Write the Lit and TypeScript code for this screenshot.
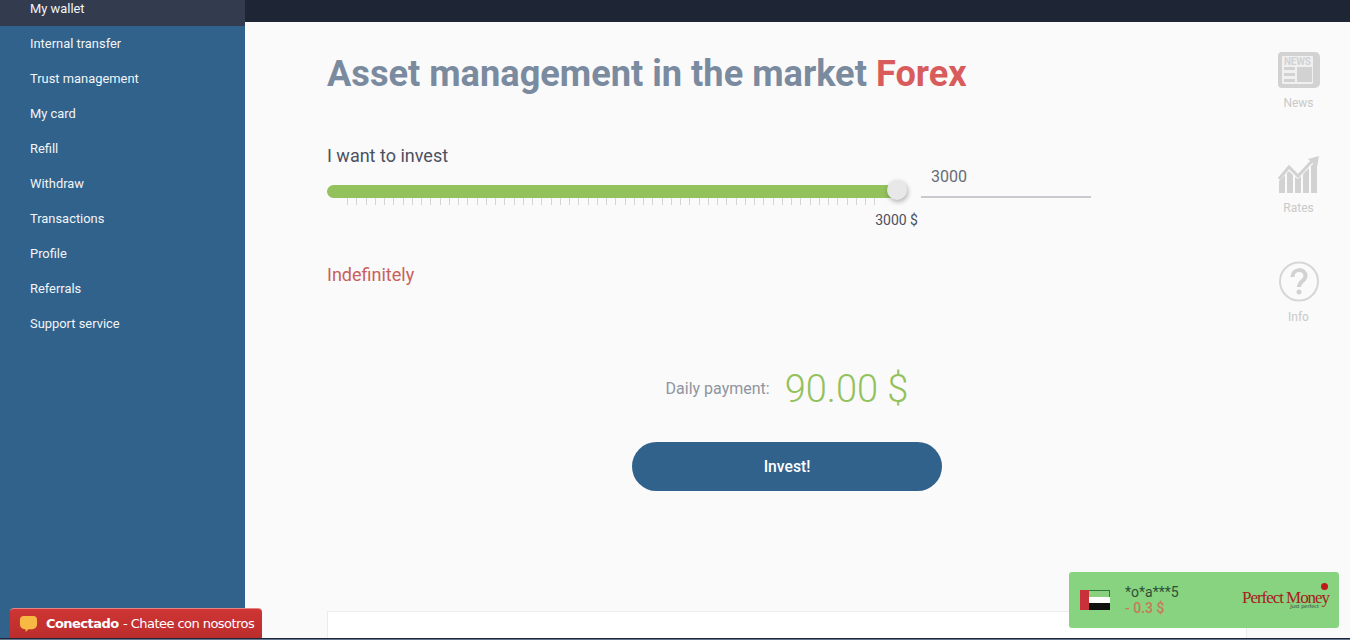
import { LitElement, css, html } from 'lit';
import { customElement } from 'lit/decorators.js';

const MENU = ['Internal transfer', 'Trust management', 'My card', 'Refill', 'Withdraw', 'Transactions', 'Profile', 'Referrals', 'Support service'];

@customElement('app-root')
export class AppRoot extends LitElement {
  static styles = css`
    :host {
      display: block;
      width: 1350px;
      height: 640px;
      overflow: hidden;
      position: relative;
      font-family: Roboto, "Liberation Sans", sans-serif;
      background: #fafafa;
    }

    .page {
      display: grid;
      grid-template-columns: 245px 1fr;
      height: 638px;
    }

    .side {
      background: #30628c;
      color: #f2f5f8;
      font-size: 12.9px;
    }

    .side a {
      display: flex;
      align-items: center;
      height: 35px;
      padding-left: 30px;
    }

    .side a.active {
      height: 26px;
      padding-bottom: 9px;
      box-sizing: border-box;
      background: #333b4f;
    }

    .topbar {
      height: 22px;
      background: #1e2534;
    }

    .main {
      display: grid;
      grid-template-columns: 1fr 105px;
      height: 616px;
      overflow: hidden;
    }

    .content {
      padding: 30px 0 0 82px;
    }

    h1 {
      margin: 0;
      font-size: 36.2px;
      line-height: 44px;
      font-weight: 700;
      color: #7a8a9f;
      white-space: nowrap;
    }

    h1 span {
      color: #d95c5c;
    }

    .want {
      margin-top: 49px;
      font-size: 18px;
      line-height: 22px;
      color: #4a5160;
    }

    .slider-row {
      display: flex;
      margin-top: 7px;
      height: 54px;
    }

    .slider {
      width: 570px;
      position: relative;
    }

    .track {
      margin-top: 11px;
      height: 13px;
      border-radius: 7px;
      background: #93c15c;
    }

    .ticks {
      display: flex;
      justify-content: space-between;
      padding: 0 21px 0 20px;
      height: 7px;
    }

    .ticks i {
      width: 1px;
      background: #d3d5d8;
    }

    .thumb {
      position: absolute;
      top: 6px;
      right: -10px;
      width: 20px;
      height: 20px;
      border-radius: 50%;
      background: #e8e8e8;
      box-shadow: 1px 2px 5px rgba(0, 0, 0, 0.3);
    }

    .value {
      position: absolute;
      top: 38px;
      right: -21px;
      font-size: 14px;
      line-height: 17px;
      color: #4a5160;
    }

    .input {
      margin: -13px 0 0 24px;
      width: 170px;
      height: 37px;
      box-sizing: border-box;
      padding-left: 10px;
      line-height: 32px;
      border-bottom: 2px solid #c9cad0;
      font-size: 16px;
      color: #666b75;
    }

    .term {
      margin-top: 36px;
      font-size: 18px;
      line-height: 22px;
      color: #c9605c;
    }

    .pay {
      display: flex;
      align-items: center;
      justify-content: center;
      gap: 15px;
      width: 920px;
      margin-top: 78px;
      color: #8f959f;
      font-size: 16px;
    }

    .pay span {
      margin-bottom: 2px;
    }

    .pay b {
      font-weight: 300;
      font-size: 38px;
      line-height: 50px;
      color: #93c15c;
    }

    .btn {
      display: flex;
      align-items: center;
      justify-content: center;
      width: 310px;
      height: 49px;
      margin: 28px 0 0 305px;
      border-radius: 25px;
      background: #30628c;
      color: #fff;
      font-size: 15.7px;
      font-weight: 500;
    }

    .panel {
      width: 918px;
      height: 60px;
      margin-top: 120px;
      background: #fff;
      border: 1px solid #ececec;
    }

    .tools {
      display: flex;
      flex-direction: column;
      align-items: center;
      padding-top: 30px;
      font-size: 12px;
      color: #c9c9c9;
    }

    .tool {
      display: flex;
      flex-direction: column;
      align-items: center;
      gap: 8px;
      width: 60px;
      margin-left: -2px;
    }

    .tool svg {
      display: block;
    }

    .tool + .tool {
      margin-top: 46px;
    }

    .footline {
      height: 1px;
      background: #1e2534;
    }

    .footline.lower {
      background: #66758f;
    }

    .chat {
      position: absolute;
      left: 10px;
      bottom: 2px;
      width: 252px;
      height: 30px;
      box-sizing: border-box;
      padding-left: 9px;
      display: flex;
      align-items: center;
      gap: 8px;
      background: linear-gradient(#cf3534, #bb2d2d);
      border-radius: 4px 4px 0 0;
      border-top: 1px solid #e38484;
      color: #fff;
      font: 13px "DejaVu Sans", sans-serif;
      letter-spacing: -0.55px;
      white-space: nowrap;
    }

    .chat svg {
      flex: none;
    }

    .chat b {
      margin-right: 1px;
    }

    .notice {
      position: absolute;
      left: 1069px;
      top: 572px;
      width: 270px;
      height: 56px;
      border-radius: 3px;
      background: #87d37f;
      display: flex;
      align-items: center;
      box-sizing: border-box;
      padding-left: 11px;
    }

    .who {
      margin-left: 15px;
      font-size: 14px;
      line-height: 16px;
      color: #2f4f38;
    }

    .who div:last-child {
      color: #c87a55;
      font-weight: 500;
    }

    .pm {
      position: absolute;
      right: 10px;
      top: 20px;
      font: 17px "Liberation Serif", serif;
      letter-spacing: -1.05px;
      color: #a8201c;
      line-height: 11px;
    }

    .pm small {
      position: absolute;
      right: 10px;
      top: 11px;
      font: 5px "DejaVu Sans", sans-serif;
      line-height: 6px;
      letter-spacing: 0;
      color: #333;
    }

    .pm i {
      position: absolute;
      right: 1px;
      top: -9px;
      width: 7px;
      height: 7px;
      border-radius: 50%;
      background: #c01818;
    }
  `;

  render() {
    return html`
      <div class="page">
        <nav class="side">
          <a class="active">My wallet</a>
          ${MENU.map(item => html`<a>${item}</a>`)}
        </nav>
        <div>
          <div class="topbar"></div>
          <div class="main">
            <div class="content">
              <h1>Asset management in the market <span>Forex</span></h1>
              <div class="want">I want to invest</div>
              <div class="slider-row">
                <div class="slider">
                  <div class="track"></div>
                  <div class="ticks">${Array.from({ length: 58 }, () => html`<i></i>`)}</div>
                  <div class="thumb"></div>
                  <div class="value">3000 $</div>
                </div>
                <div class="input">3000</div>
              </div>
              <div class="term">Indefinitely</div>
              <div class="pay"><span>Daily payment:</span><b>90.00 $</b></div>
              <div class="btn">Invest!</div>
              <div class="panel"></div>
            </div>
            <aside class="tools">
              <div class="tool">
                <svg width="42" height="36" viewBox="0 0 42 36">
                  <path fill="#d2d2d2" d="M4 0h33a5 5 0 0 1 5 5v26a5 5 0 0 1-5 5H4a4 4 0 0 1-4-4V4a4 4 0 0 1 4-4z"/>
                  <rect x="4" y="4" width="31" height="28" rx="1" fill="#f0f0f0"/>
                  <rect x="19" y="15" width="15" height="15" fill="#d2d2d2"/>
                  <path stroke="#d2d2d2" stroke-width="3" d="M6 16.500h11M6 22.500h11M6 28.500h11"/>
                  <text x="6" y="13" font-size="10" font-weight="700" font-family="Roboto" fill="#d2d2d2" textLength="27">NEWS</text>
                </svg>
                <span>News</span>
              </div>
              <div class="tool">
                <svg width="42" height="37" viewBox="0 0 42 37">
                  <path fill="#d2d2d2" d="M1 37V25l6-6v18zM9 37V17l2-2 4 4v18zM17 37V21l3 2 3-3v17zM25 37V18l6-6v25zM33 37V10l6-6v33z"/>
                  <path fill="none" stroke="#d2d2d2" stroke-width="3" d="M1 23L11 11l9 9L36 3"/>
                  <path fill="#d2d2d2" d="M30 3l11-3-2 11z"/>
                </svg>
                <span>Rates</span>
              </div>
              <div class="tool">
                <svg width="42" height="41" viewBox="0 0 42 41">
                  <circle cx="21" cy="20.500" r="19" fill="none" stroke="#d6d6d6" stroke-width="2"/>
                  <path fill="none" stroke="#d2d2d2" stroke-width="4" d="M14.500 16c0-9 13-9 13-1 0 5-6.500 5-6.500 11"/>
                  <circle cx="21" cy="31" r="2.500" fill="#d2d2d2"/>
                </svg>
                <span>Info</span>
              </div>
            </aside>
          </div>
        </div>
      </div>
      <div class="footline"></div>
      <div class="footline lower"></div>

      <div class="chat">
        <svg width="19" height="19" viewBox="0 0 20 20">
          <path fill="#f7b944" d="M5 2h10a4 4 0 0 1 4 4v5a5 5 0 0 1-5 5h-4l-3 3v-3H6a5 5 0 0 1-5-5V6a4 4 0 0 1 4-4z"/>
        </svg>
        <span><b>Conectado</b> - Chatee con nosotros</span>
      </div>

      <div class="notice">
        <svg width="30" height="20" viewBox="0 0 30 20">
          <rect x="0.500" y="0.500" width="29" height="7" fill="#8ad07e" stroke="#2e7a3c"/>
          <rect y="7" width="30" height="6" fill="#fff"/>
          <rect y="13" width="30" height="7" fill="#111"/>
          <rect width="9" height="20" fill="#c8303a"/>
        </svg>
        <div class="who">
          <div>*o*a***5</div>
          <div>- 0.3 $</div>
        </div>
        <div class="pm">Perfect Money<small>Just perfect</small><i></i></div>
      </div>
    `;
  }
}
